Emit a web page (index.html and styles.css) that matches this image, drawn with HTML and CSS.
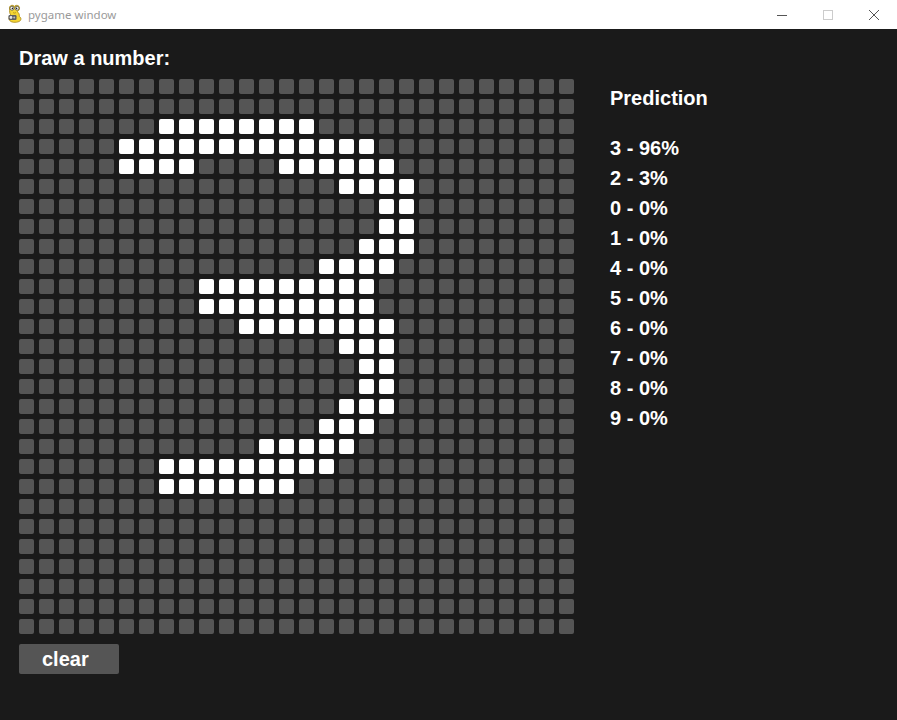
FILE: index.html
```html
<!DOCTYPE html>
<html>
<head>
<meta charset="utf-8">
<title>pygame window</title>
<link rel="stylesheet" href="styles.css">
</head>
<body>
<div class="titlebar">
  <svg class="appicon" width="15" height="19" viewBox="0 0 15 19">
    <path d="M2.5 4.5 C2 1 6.5 0.5 7.3 2.5 C8.3 0.5 13 1 12.5 4.5 C12.3 6.5 10.8 7.2 10.2 7.6 C11.8 8.6 12.6 10.5 12.3 12.5 C14.5 13.5 14.5 16.5 12 17.6 C9 18.9 4 18.6 2.6 16.4 C1.3 14.4 2.2 12 3.8 11 C2.4 9.8 2.6 7 2.5 4.5 Z" fill="#f5d533" stroke="#a88718" stroke-width="0.8"/>
    <circle cx="5" cy="4.2" r="2" fill="#fff" stroke="#3a3a3a" stroke-width="0.7"/>
    <circle cx="10" cy="4.2" r="2" fill="#fff" stroke="#3a3a3a" stroke-width="0.7"/>
    <circle cx="5.4" cy="4.4" r="0.8" fill="#222"/>
    <circle cx="9.6" cy="4.4" r="0.8" fill="#222"/>
    <path d="M6 8.6 Q7.5 9.6 9 8.6" fill="none" stroke="#a88718" stroke-width="0.7"/>
    <rect x="1.5" y="11" width="8" height="5" rx="1.2" fill="#5e5e5e"/>
    <circle cx="4" cy="13.5" r="1.4" fill="#e6e6e6"/>
    <circle cx="7.2" cy="13.5" r="1" fill="#bdbdbd"/>
  </svg>
  <span class="wintitle">pygame window</span>
  <div class="controls">
    <span class="ctl"><svg width="12" height="12" viewBox="0 0 12 12"><path d="M1 6.5 H11" stroke="#555" stroke-width="1"/></svg></span>
    <span class="ctl"><svg width="12" height="12" viewBox="0 0 12 12"><rect x="1.5" y="1.5" width="9" height="9" fill="none" stroke="#ccc" stroke-width="1"/></svg></span>
    <span class="ctl"><svg width="12" height="12" viewBox="0 0 12 12"><path d="M1 1 L11 11 M11 1 L1 11" stroke="#555" stroke-width="1"/></svg></span>
  </div>
</div>
<div class="main">
  <div class="left">
    <div class="heading">Draw a number:</div>
    <div class="grid">
<i></i><i></i><i></i><i></i><i></i><i></i><i></i><i></i><i></i><i></i><i></i><i></i><i></i><i></i><i></i><i></i><i></i><i></i><i></i><i></i><i></i><i></i><i></i><i></i><i></i><i></i><i></i><i></i>
<i></i><i></i><i></i><i></i><i></i><i></i><i></i><i></i><i></i><i></i><i></i><i></i><i></i><i></i><i></i><i></i><i></i><i></i><i></i><i></i><i></i><i></i><i></i><i></i><i></i><i></i><i></i><i></i>
<i></i><i></i><i></i><i></i><i></i><i></i><i></i><i class="on"></i><i class="on"></i><i class="on"></i><i class="on"></i><i class="on"></i><i class="on"></i><i class="on"></i><i class="on"></i><i></i><i></i><i></i><i></i><i></i><i></i><i></i><i></i><i></i><i></i><i></i><i></i><i></i>
<i></i><i></i><i></i><i></i><i></i><i class="on"></i><i class="on"></i><i class="on"></i><i class="on"></i><i class="on"></i><i class="on"></i><i class="on"></i><i class="on"></i><i class="on"></i><i class="on"></i><i class="on"></i><i class="on"></i><i class="on"></i><i></i><i></i><i></i><i></i><i></i><i></i><i></i><i></i><i></i><i></i>
<i></i><i></i><i></i><i></i><i></i><i class="on"></i><i class="on"></i><i class="on"></i><i class="on"></i><i></i><i></i><i></i><i></i><i class="on"></i><i class="on"></i><i class="on"></i><i class="on"></i><i class="on"></i><i class="on"></i><i></i><i></i><i></i><i></i><i></i><i></i><i></i><i></i><i></i>
<i></i><i></i><i></i><i></i><i></i><i></i><i></i><i></i><i></i><i></i><i></i><i></i><i></i><i></i><i></i><i></i><i class="on"></i><i class="on"></i><i class="on"></i><i class="on"></i><i></i><i></i><i></i><i></i><i></i><i></i><i></i><i></i>
<i></i><i></i><i></i><i></i><i></i><i></i><i></i><i></i><i></i><i></i><i></i><i></i><i></i><i></i><i></i><i></i><i></i><i></i><i class="on"></i><i class="on"></i><i></i><i></i><i></i><i></i><i></i><i></i><i></i><i></i>
<i></i><i></i><i></i><i></i><i></i><i></i><i></i><i></i><i></i><i></i><i></i><i></i><i></i><i></i><i></i><i></i><i></i><i></i><i class="on"></i><i class="on"></i><i></i><i></i><i></i><i></i><i></i><i></i><i></i><i></i>
<i></i><i></i><i></i><i></i><i></i><i></i><i></i><i></i><i></i><i></i><i></i><i></i><i></i><i></i><i></i><i></i><i></i><i class="on"></i><i class="on"></i><i class="on"></i><i></i><i></i><i></i><i></i><i></i><i></i><i></i><i></i>
<i></i><i></i><i></i><i></i><i></i><i></i><i></i><i></i><i></i><i></i><i></i><i></i><i></i><i></i><i></i><i class="on"></i><i class="on"></i><i class="on"></i><i class="on"></i><i></i><i></i><i></i><i></i><i></i><i></i><i></i><i></i><i></i>
<i></i><i></i><i></i><i></i><i></i><i></i><i></i><i></i><i></i><i class="on"></i><i class="on"></i><i class="on"></i><i class="on"></i><i class="on"></i><i class="on"></i><i class="on"></i><i class="on"></i><i class="on"></i><i></i><i></i><i></i><i></i><i></i><i></i><i></i><i></i><i></i><i></i>
<i></i><i></i><i></i><i></i><i></i><i></i><i></i><i></i><i></i><i class="on"></i><i class="on"></i><i class="on"></i><i class="on"></i><i class="on"></i><i class="on"></i><i class="on"></i><i class="on"></i><i class="on"></i><i></i><i></i><i></i><i></i><i></i><i></i><i></i><i></i><i></i><i></i>
<i></i><i></i><i></i><i></i><i></i><i></i><i></i><i></i><i></i><i></i><i></i><i class="on"></i><i class="on"></i><i class="on"></i><i class="on"></i><i class="on"></i><i class="on"></i><i class="on"></i><i class="on"></i><i></i><i></i><i></i><i></i><i></i><i></i><i></i><i></i><i></i>
<i></i><i></i><i></i><i></i><i></i><i></i><i></i><i></i><i></i><i></i><i></i><i></i><i></i><i></i><i></i><i></i><i class="on"></i><i class="on"></i><i class="on"></i><i></i><i></i><i></i><i></i><i></i><i></i><i></i><i></i><i></i>
<i></i><i></i><i></i><i></i><i></i><i></i><i></i><i></i><i></i><i></i><i></i><i></i><i></i><i></i><i></i><i></i><i></i><i class="on"></i><i class="on"></i><i></i><i></i><i></i><i></i><i></i><i></i><i></i><i></i><i></i>
<i></i><i></i><i></i><i></i><i></i><i></i><i></i><i></i><i></i><i></i><i></i><i></i><i></i><i></i><i></i><i></i><i></i><i class="on"></i><i class="on"></i><i></i><i></i><i></i><i></i><i></i><i></i><i></i><i></i><i></i>
<i></i><i></i><i></i><i></i><i></i><i></i><i></i><i></i><i></i><i></i><i></i><i></i><i></i><i></i><i></i><i></i><i class="on"></i><i class="on"></i><i class="on"></i><i></i><i></i><i></i><i></i><i></i><i></i><i></i><i></i><i></i>
<i></i><i></i><i></i><i></i><i></i><i></i><i></i><i></i><i></i><i></i><i></i><i></i><i></i><i></i><i></i><i class="on"></i><i class="on"></i><i class="on"></i><i></i><i></i><i></i><i></i><i></i><i></i><i></i><i></i><i></i><i></i>
<i></i><i></i><i></i><i></i><i></i><i></i><i></i><i></i><i></i><i></i><i></i><i></i><i class="on"></i><i class="on"></i><i class="on"></i><i class="on"></i><i class="on"></i><i></i><i></i><i></i><i></i><i></i><i></i><i></i><i></i><i></i><i></i><i></i>
<i></i><i></i><i></i><i></i><i></i><i></i><i></i><i class="on"></i><i class="on"></i><i class="on"></i><i class="on"></i><i class="on"></i><i class="on"></i><i class="on"></i><i class="on"></i><i class="on"></i><i></i><i></i><i></i><i></i><i></i><i></i><i></i><i></i><i></i><i></i><i></i><i></i>
<i></i><i></i><i></i><i></i><i></i><i></i><i></i><i class="on"></i><i class="on"></i><i class="on"></i><i class="on"></i><i class="on"></i><i class="on"></i><i class="on"></i><i></i><i></i><i></i><i></i><i></i><i></i><i></i><i></i><i></i><i></i><i></i><i></i><i></i><i></i>
<i></i><i></i><i></i><i></i><i></i><i></i><i></i><i></i><i></i><i></i><i></i><i></i><i></i><i></i><i></i><i></i><i></i><i></i><i></i><i></i><i></i><i></i><i></i><i></i><i></i><i></i><i></i><i></i>
<i></i><i></i><i></i><i></i><i></i><i></i><i></i><i></i><i></i><i></i><i></i><i></i><i></i><i></i><i></i><i></i><i></i><i></i><i></i><i></i><i></i><i></i><i></i><i></i><i></i><i></i><i></i><i></i>
<i></i><i></i><i></i><i></i><i></i><i></i><i></i><i></i><i></i><i></i><i></i><i></i><i></i><i></i><i></i><i></i><i></i><i></i><i></i><i></i><i></i><i></i><i></i><i></i><i></i><i></i><i></i><i></i>
<i></i><i></i><i></i><i></i><i></i><i></i><i></i><i></i><i></i><i></i><i></i><i></i><i></i><i></i><i></i><i></i><i></i><i></i><i></i><i></i><i></i><i></i><i></i><i></i><i></i><i></i><i></i><i></i>
<i></i><i></i><i></i><i></i><i></i><i></i><i></i><i></i><i></i><i></i><i></i><i></i><i></i><i></i><i></i><i></i><i></i><i></i><i></i><i></i><i></i><i></i><i></i><i></i><i></i><i></i><i></i><i></i>
<i></i><i></i><i></i><i></i><i></i><i></i><i></i><i></i><i></i><i></i><i></i><i></i><i></i><i></i><i></i><i></i><i></i><i></i><i></i><i></i><i></i><i></i><i></i><i></i><i></i><i></i><i></i><i></i>
<i></i><i></i><i></i><i></i><i></i><i></i><i></i><i></i><i></i><i></i><i></i><i></i><i></i><i></i><i></i><i></i><i></i><i></i><i></i><i></i><i></i><i></i><i></i><i></i><i></i><i></i><i></i><i></i>
    </div>
    <button class="clear">clear</button>
  </div>
  <div class="right">
    <div class="pred-title">Prediction</div>
    <ul class="preds">
      <li>3 - 96%</li>
      <li>2 - 3%</li>
      <li>0 - 0%</li>
      <li>1 - 0%</li>
      <li>4 - 0%</li>
      <li>5 - 0%</li>
      <li>6 - 0%</li>
      <li>7 - 0%</li>
      <li>8 - 0%</li>
      <li>9 - 0%</li>
    </ul>
  </div>
</div>
</body>
</html>
```
FILE: styles.css
```css
* { box-sizing: border-box; }
html, body {
  margin: 0;
  padding: 0;
  width: 897px;
  height: 720px;
  overflow: hidden;
  background: #1a1a1a;
  font-family: "Liberation Sans", Arial, sans-serif;
}
.titlebar {
  height: 29px;
  background: #ffffff;
  display: flex;
  align-items: center;
  padding-left: 7px;
}
.appicon {
  display: block;
  margin-top: -2px;
}
.wintitle {
  margin-left: 6px;
  font-family: "Noto Sans", "DejaVu Sans", sans-serif;
  font-size: 11.5px;
  color: #9a9a9a;
  margin-top: -1px;
}
.controls {
  margin-left: auto;
  display: flex;
  height: 29px;
}
.ctl {
  width: 46px;
  height: 29px;
  display: flex;
  align-items: center;
  justify-content: center;
}
.main {
  display: flex;
  padding: 19px 0 0 19px;
  color: #ffffff;
  font-weight: bold;
  font-size: 20px;
}
.left {
  display: flex;
  flex-direction: column;
  align-items: flex-start;
}
.heading {
  line-height: 20px;
  height: 20px;
}
.grid {
  margin-top: 11px;
  display: grid;
  grid-template-columns: repeat(28, 15px);
  grid-auto-rows: 15px;
  gap: 5px;
}
.grid i {
  display: block;
  background: #555555;
  border-radius: 2px;
}
.grid i.on {
  background: #ffffff;
}
.clear {
  margin-top: 10px;
  width: 100px;
  height: 30px;
  border: none;
  border-radius: 2px;
  background: #555555;
  color: #ffffff;
  font-family: "Liberation Sans", Arial, sans-serif;
  font-weight: bold;
  font-size: 20px;
  line-height: 30px;
  padding: 0 0 0 23px;
  text-align: left;
}
.right {
  margin-left: 36px;
  padding-top: 40px;
}
.pred-title {
  line-height: 20px;
  height: 20px;
}
.preds {
  list-style: none;
  margin: 25px 0 0 0;
  padding: 0;
}
.preds li {
  line-height: 30px;
  height: 30px;
}
```
